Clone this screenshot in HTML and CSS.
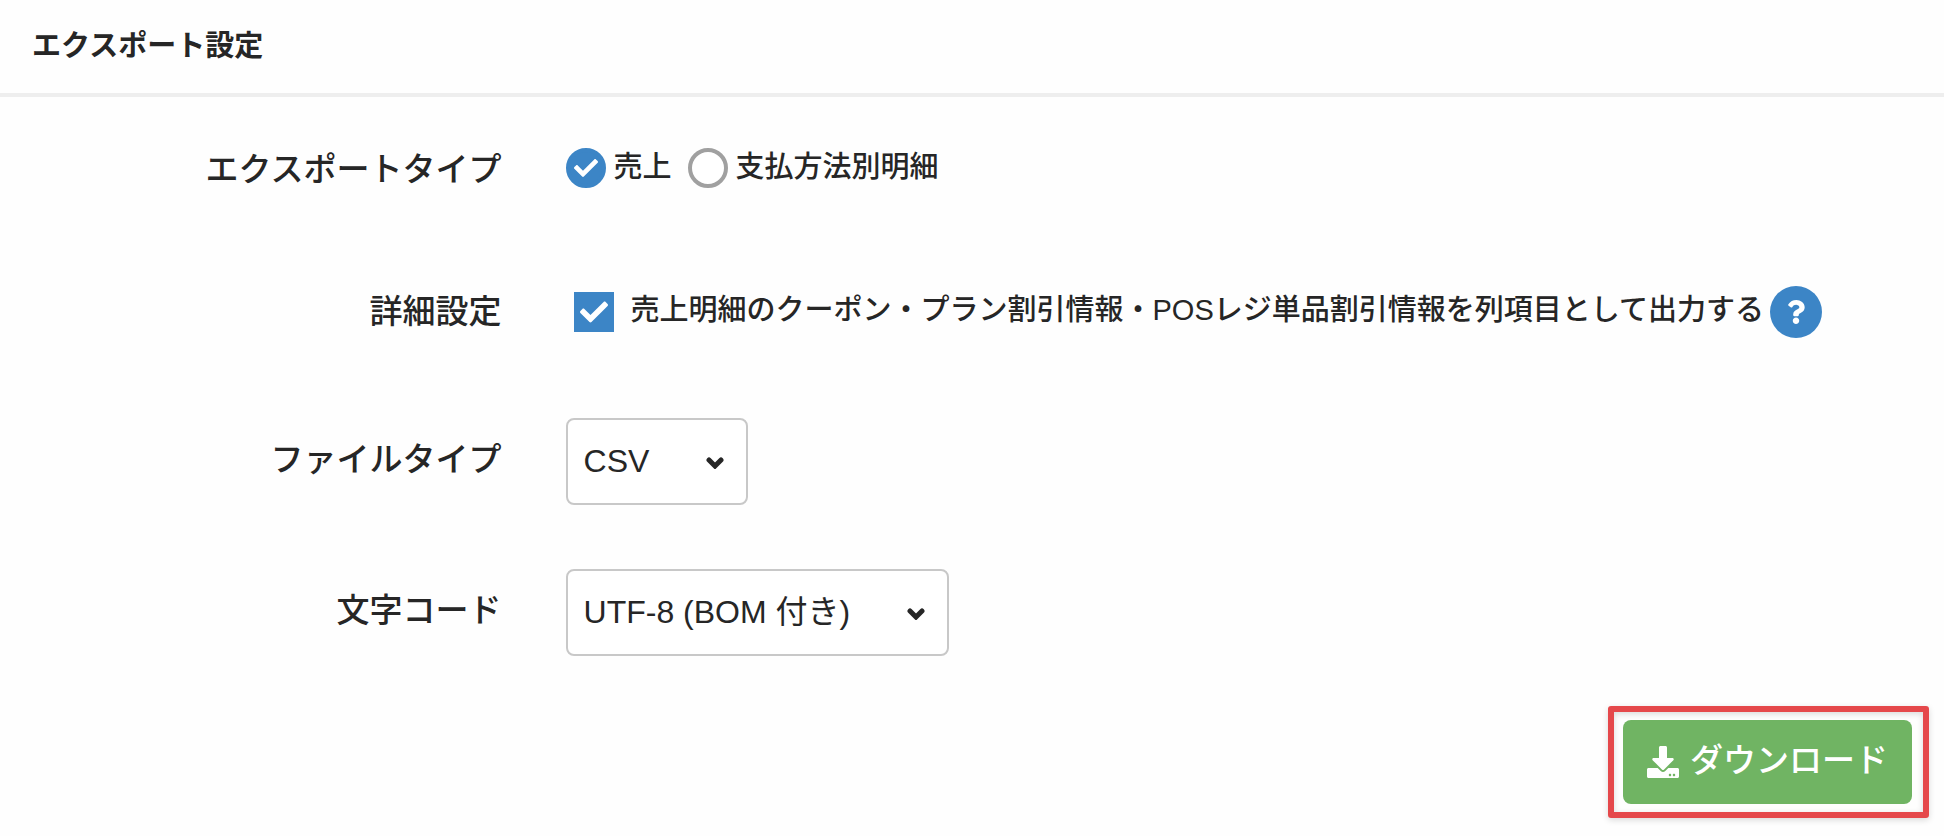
FILE: index.html
```
<!DOCTYPE html>
<html lang="ja">
<head>
    <meta charset="UTF-8">
    <meta name="viewport" content="width=device-width, initial-scale=1.0">
    <title>エクスポート設定</title>
    <link rel="stylesheet" href="styles.css">
</head>
<body>
    <header class="panel-header">
        <h1>エクスポート設定</h1>
    </header>

    <form class="export-form">
        <div class="form-row type-row" role="radiogroup" aria-labelledby="type-label">
            <span class="row-label" id="type-label">エクスポートタイプ</span>
            <div class="row-body options">
                <label class="option">
                    <span class="tick">
                        <input type="radio" name="export_type" value="sales" checked>
                        <svg viewBox="0 0 512 512"><path d="M173.898 439.404l-166.4-166.4c-9.997-9.997-9.997-26.206 0-36.204l36.203-36.204c9.997-9.998 26.207-9.998 36.204 0L192 312.69 432.095 72.596c9.997-9.997 26.207-9.997 36.204 0l36.203 36.204c9.997 9.997 9.997 26.206 0 36.204l-294.4 294.401c-9.998 9.997-26.207 9.997-36.204-.001z"/></svg>
                    </span>
                    <span class="option-text">売上</span>
                </label>
                <label class="option">
                    <span class="tick">
                        <input type="radio" name="export_type" value="payment">
                        <svg viewBox="0 0 512 512"><path d="M173.898 439.404l-166.4-166.4c-9.997-9.997-9.997-26.206 0-36.204l36.203-36.204c9.997-9.998 26.207-9.998 36.204 0L192 312.69 432.095 72.596c9.997-9.997 26.207-9.997 36.204 0l36.203 36.204c9.997 9.997 9.997 26.206 0 36.204l-294.4 294.401c-9.998 9.997-26.207 9.997-36.204-.001z"/></svg>
                    </span>
                    <span class="option-text">支払方法別明細</span>
                </label>
            </div>
        </div>

        <div class="form-row detail-row">
            <span class="row-label">詳細設定</span>
            <div class="row-body detail">
                <label class="option option-check">
                    <span class="tick">
                        <input type="checkbox" name="discount_columns" checked>
                        <svg viewBox="0 0 512 512"><path d="M173.898 439.404l-166.4-166.4c-9.997-9.997-9.997-26.206 0-36.204l36.203-36.204c9.997-9.998 26.207-9.998 36.204 0L192 312.69 432.095 72.596c9.997-9.997 26.207-9.997 36.204 0l36.203 36.204c9.997 9.997 9.997 26.206 0 36.204l-294.4 294.401c-9.998 9.997-26.207 9.997-36.204-.001z"/></svg>
                    </span>
                    <span class="option-text">売上明細のクーポン・プラン割引情報・POSレジ単品割引情報を列項目として出力する</span>
                </label>
                <button type="button" class="help" aria-label="ヘルプ">
                    <svg viewBox="0 0 384 512"><path d="M202.021 0C122.202 0 70.503 32.703 29.914 91.026c-7.363 10.58-5.093 25.086 5.178 32.874l43.138 32.709c10.373 7.865 25.132 6.026 33.253-4.148 25.049-31.381 43.63-49.449 82.757-49.449 30.764 0 68.816 19.799 68.816 49.631 0 22.552-18.617 34.134-48.993 51.164-35.423 19.86-82.299 44.576-82.299 106.405V320c0 13.255 10.745 24 24 24h72.471c13.255 0 24-10.745 24-24v-5.773c0-42.86 125.268-44.645 125.268-160.627C377.504 66.256 286.902 0 202.021 0zM192 373.459c-38.196 0-69.271 31.075-69.271 69.271 0 38.195 31.075 69.27 69.271 69.27s69.271-31.075 69.271-69.271-31.075-69.27-69.271-69.27z"/></svg>
                </button>
            </div>
        </div>

        <div class="form-row">
            <label class="row-label" for="file-type">ファイルタイプ</label>
            <div class="row-body">
                <div class="select-box select-short">
                    <select id="file-type" name="file_type">
                        <option>CSV</option>
                    </select>
                    <svg viewBox="0 0 18 12"><path d="M3 3l6 6 6-6"/></svg>
                </div>
            </div>
        </div>

        <div class="form-row">
            <label class="row-label" for="encoding">文字コード</label>
            <div class="row-body">
                <div class="select-box select-long">
                    <select id="encoding" name="encoding">
                        <option>UTF-8 (BOM 付き)</option>
                    </select>
                    <svg viewBox="0 0 18 12"><path d="M3 3l6 6 6-6"/></svg>
                </div>
            </div>
        </div>

        <div class="form-footer">
            <div class="highlight">
                <button type="submit" class="download-btn">
                    <svg viewBox="0 0 512 512"><path d="M216 0h80c13.3 0 24 10.7 24 24v168h87.7c17.8 0 26.7 21.5 14.1 34.1L269.7 378.3c-7.5 7.5-19.8 7.5-27.3 0L90.1 226.1c-12.6-12.6-3.7-34.1 14.1-34.1H192V24c0-13.3 10.7-24 24-24zm296 376v112c0 13.3-10.7 24-24 24H24c-13.3 0-24-10.7-24-24V376c0-13.3 10.7-24 24-24h146.7l49 49c20.1 20.1 52.5 20.1 72.6 0l49-49H488c13.3 0 24 10.7 24 24zm-124 88c0-11-9-20-20-20s-20 9-20 20 9 20 20 20 20-9 20-20zm64 0c0-11-9-20-20-20s-20 9-20 20 9 20 20 20 20-9 20-20z"/></svg>
                    <span>ダウンロード</span>
                </button>
            </div>
        </div>
    </form>
</body>
</html>
```
FILE: styles.css
```
* {
    box-sizing: border-box;
}

body {
    margin: 0;
    background: #fefefe;
    color: #262626;
    font-family: "Liberation Sans", "Noto Sans CJK JP", sans-serif;
    font-size: 33px;
    font-weight: 500;
    line-height: 48px;
}

svg {
    display: block;
}

.panel-header {
    padding: 22px 32px 23px;
    border-bottom: 4px solid #eee;
}

.panel-header h1 {
    margin: 0;
    font-size: 29px;
    line-height: 48px;
    font-weight: bold;
}

.export-form {
    padding: 33px 15px 18px 0;
}

.form-row {
    display: grid;
    grid-template-columns: 26% 1fr;
    column-gap: 64px;
    align-items: center;
    min-height: 76px;
    margin-bottom: 64px;
}

.detail-row {
    min-height: 84px;
}

.row-label {
    text-align: right;
    padding-bottom: 4px;
}

.type-row .row-label {
    padding: 4px 0 0;
}

.detail-row .row-label {
    padding: 0;
}

.options {
    display: flex;
    gap: 16px;
}

.detail {
    display: flex;
    align-items: center;
    gap: 6px;
    padding-left: 8px;
}

.option {
    display: flex;
    align-items: center;
    gap: 8px;
    font-size: 29px;
    line-height: 40px;
    cursor: pointer;
}

.option-check {
    gap: 17px;
}

.option-text {
    padding-bottom: 2px;
}

.option-check .option-text {
    padding-bottom: 4px;
}

.tick {
    position: relative;
    flex: none;
    width: 40px;
    height: 40px;
}

.tick input {
    appearance: none;
    display: block;
    width: 40px;
    height: 40px;
    margin: 0;
    background: #fff;
    border: 4px solid #a0a0a0;
    cursor: pointer;
}

.tick input[type="radio"] {
    border-radius: 50%;
}

.tick input:checked {
    background: #3c85c6;
    border-color: #3c85c6;
}

/* check mark over the input */
.tick svg {
    display: none;
    position: absolute;
    inset: 0;
    width: 24px;
    height: 24px;
    margin: auto;
    fill: #fff;
    pointer-events: none;
}

.option-check .tick svg {
    width: 28px;
    height: 28px;
}

.tick input:checked + svg {
    display: block;
}

.help {
    display: flex;
    flex: none;
    align-items: center;
    justify-content: center;
    width: 52px;
    height: 52px;
    padding: 0;
    border: none;
    border-radius: 50%;
    background: #3c85c6;
    cursor: pointer;
}

.help svg {
    width: 18px;
    height: 24px;
    fill: #fff;
}

.select-box {
    position: relative;
}

.select-short {
    width: 182px;
}

.select-long {
    width: 383px;
}

.select-box select {
    appearance: none;
    display: block;
    width: 100%;
    height: 87px;
    padding: 0 16px 2px;
    border: 2px solid #c8c8c8;
    border-radius: 8px;
    background: #fff;
    color: inherit;
    font-family: inherit;
    font-size: 32px;
}

.select-box svg {
    position: absolute;
    top: 39px;
    right: 24px;
    width: 18px;
    height: 12px;
    fill: none;
    stroke: #262626;
    stroke-width: 5;
    stroke-linecap: round;
    pointer-events: none;
}

.form-footer {
    display: flex;
    justify-content: flex-end;
    margin-top: -14px;
}

/* red frame around the button */
.highlight {
    padding: 8px 11px 8px 9px;
    border: 6px solid #e5484b;
    border-radius: 3px;
    box-shadow: 0 2px 6px rgba(0, 0, 0, 0.15), inset 0 2px 6px rgba(0, 0, 0, 0.15);
}

.download-btn {
    display: flex;
    align-items: center;
    gap: 11px;
    height: 84px;
    padding: 0 24px;
    border: none;
    border-radius: 8px;
    background: #70b463;
    color: #fff;
    font-family: inherit;
    font-size: 33px;
    font-weight: 500;
    line-height: 48px;
    cursor: pointer;
}

.download-btn svg {
    width: 32px;
    height: 32px;
    fill: #fff;
}

.download-btn span {
    padding-bottom: 2px;
}
```
